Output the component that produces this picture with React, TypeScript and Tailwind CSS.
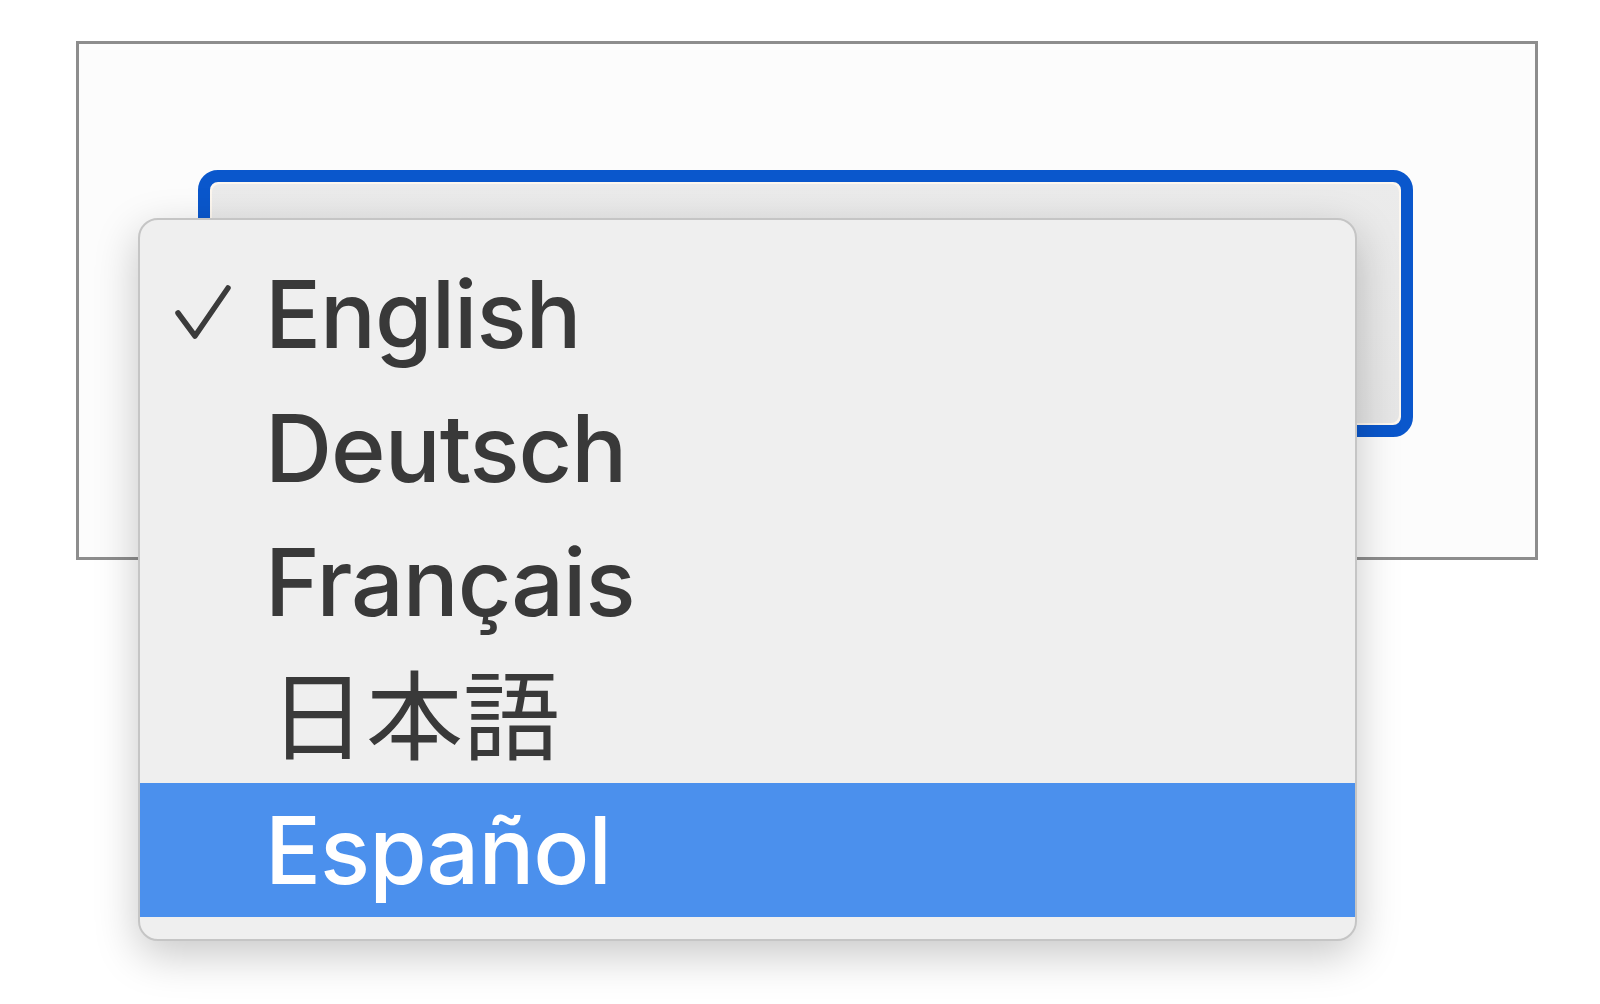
import { useState } from "react";

const languages = ["English", "Deutsch", "Français", "日本語", "Español"];

function Check() {
  return (
    <svg width="58" height="58" viewBox="0 0 58 58" fill="none" className="absolute left-[34px] top-[37px]">
      <path d="M4 29 L21 52 L54 4" stroke="#3b3b3b" strokeWidth="5.5" strokeLinecap="round" strokeLinejoin="round" />
    </svg>
  );
}

export default function App() {
  const [selected] = useState(0);
  const [hover] = useState(4);

  return (
    <div className="min-h-screen w-full bg-white pl-[76px] pt-[41px] font-['Inter','Noto_Sans_CJK_JP',sans-serif]">
      <div className="h-[519px] w-[1462px] border-[3px] border-[#8d8d8d] bg-[#fcfcfc] pl-[119px] pt-[126px]">
        <div className="relative h-[267px] w-[1215px] rounded-[20px] border-[12px] border-[#0a57cc] bg-[#fdf7ef] p-[2px]">
          <div className="h-full w-full rounded-[8px] bg-gradient-to-b from-[#ebebeb] to-[#e6e6e6]" />

          <div className="absolute left-[-72px] top-[36px] z-10 w-[1219px] rounded-[20px] border-2 border-[#c5c5c5] bg-[#efefef] pb-[22px] pt-[27px] shadow-[0_14px_44px_rgba(0,0,0,0.22)]">
            {languages.map((lang, i) => (
              <div
                key={lang}
                className={
                  i === hover
                    ? "relative flex h-[134px] items-center bg-[#4b90ed] pl-[125px] text-white"
                    : "relative flex h-[134px] items-center pl-[125px] text-[#393939]"
                }
              >
                {i === selected && <Check />}
                <span
                  className={
                    lang === "日本語"
                      ? "pl-[4px] text-[97px] font-normal leading-none"
                      : "text-[93px] font-medium leading-none tracking-[-1px]"
                  }
                >
                  {lang}
                </span>
              </div>
            ))}
          </div>
        </div>
      </div>
    </div>
  );
}
